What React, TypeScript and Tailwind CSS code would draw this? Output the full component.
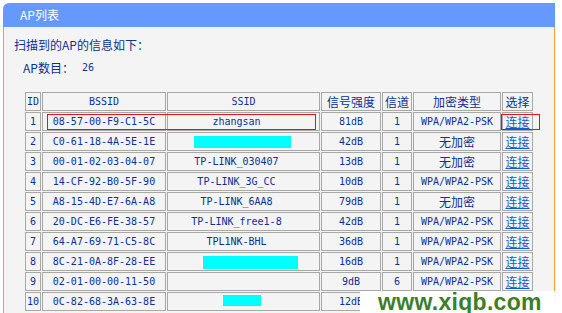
import React from 'react';

type Row = {
    id: number;
    bssid: string;
    ssid?: string;
    mask?: string;
    sig: string;
    ch: string;
    enc: string;
    link: boolean;
};

const rows: Row[] = [
    { id: 1, bssid: '08-57-00-F9-C1-5C', ssid: 'zhangsan', sig: '81dB', ch: '1', enc: 'WPA/WPA2-PSK', link: true },
    { id: 2, bssid: 'C0-61-18-4A-5E-1E', mask: 'w-[97px] h-[12px] -ml-[3px]', sig: '42dB', ch: '1', enc: '无加密', link: true },
    { id: 3, bssid: '00-01-02-03-04-07', ssid: 'TP-LINK_030407', sig: '13dB', ch: '1', enc: '无加密', link: true },
    { id: 4, bssid: '14-CF-92-B0-5F-90', ssid: 'TP-LINK_3G_CC', sig: '10dB', ch: '1', enc: 'WPA/WPA2-PSK', link: true },
    { id: 5, bssid: 'A8-15-4D-E7-6A-A8', ssid: 'TP-LINK_6AA8', sig: '79dB', ch: '1', enc: '无加密', link: true },
    { id: 6, bssid: '20-DC-E6-FE-38-57', ssid: 'TP-LINK_free1-8', sig: '42dB', ch: '1', enc: 'WPA/WPA2-PSK', link: true },
    { id: 7, bssid: '64-A7-69-71-C5-8C', ssid: 'TPL1NK-BHL', sig: '36dB', ch: '1', enc: 'WPA/WPA2-PSK', link: true },
    { id: 8, bssid: '8C-21-0A-8F-28-EE', mask: 'w-[95px] h-[13px] ml-[13px]', sig: '16dB', ch: '1', enc: 'WPA/WPA2-PSK', link: true },
    { id: 9, bssid: '02-01-00-00-11-50', ssid: '', sig: '9dB', ch: '6', enc: 'WPA/WPA2-PSK', link: true },
    // last row is mostly covered by the watermark
    { id: 10, bssid: '0C-82-68-3A-63-8E', mask: 'w-[38px] h-[11px] -ml-[4px] -mt-[3px]', sig: '12dB', ch: '', enc: '', link: false },
];

const mono = "font-['DejaVu_Sans_Mono',monospace] text-[10px]";
const cjk = "font-['Noto_Sans_CJK_SC',sans-serif] text-[12px]";
const cell = 'border border-[#a8a8a8] h-[19px] p-0 text-center align-middle leading-[17px]';

const App = () => {
    return (
        <div className="relative w-[562px] h-[313px] overflow-hidden bg-white pt-[3px] pl-[3px] text-[#0f2f96]">
            <div className="w-[552px] h-[310px] flex flex-col">
                <div className="h-[24px] bg-[#6699ff] rounded-tl-[6px] pl-[17px] flex items-center">
                    <span className={`${cjk} text-white`}>AP列表</span>
                </div>
                <div className="flex-1 bg-[#f4f4f4] border-l border-r border-[#ff9933] pt-[10px]">
                    <div className={`${cjk} h-[16px] leading-[16px] pl-[10px]`}>扫描到的AP的信息如下：</div>
                    <div className={`${cjk} h-[16px] leading-[16px] pl-[19px] mt-[7px] flex`}>
                        <span className="w-[59px]">AP数目：</span>
                        <span className={mono}>26</span>
                    </div>
                    <table className="table-fixed border-separate border-spacing-[1px] ml-[20px] mt-[15px]">
                        <thead>
                            <tr>
                                <th className={`${cell} ${mono} font-normal w-[16px]`}>ID</th>
                                <th className={`${cell} ${mono} font-normal w-[124px]`}>BSSID</th>
                                <th className={`${cell} ${mono} font-normal w-[153px]`}>SSID</th>
                                <th className={`${cell} ${cjk} font-normal w-[60px]`}>信号强度</th>
                                <th className={`${cell} ${cjk} font-normal w-[30px]`}>信道</th>
                                <th className={`${cell} ${cjk} font-normal w-[88px]`}>加密类型</th>
                                <th className={`${cell} ${cjk} font-normal w-[31px]`}>选择</th>
                            </tr>
                        </thead>
                        <tbody>
                            {rows.map((r) => (
                                <tr key={r.id}>
                                    <td className={`${cell} ${mono}`}>{r.id}</td>
                                    <td className={`${cell} ${mono}`}>{r.bssid}</td>
                                    <td className={`${cell} ${mono}`}>
                                        {r.mask ? (
                                            <span className={`inline-block align-middle bg-[#00ffff] ${r.mask}`} />
                                        ) : (
                                            <span className="pr-[14px]">{r.ssid}</span>
                                        )}
                                    </td>
                                    <td className={`${cell} ${mono}`}>
                                        <span className={r.id === 1 ? 'bg-white rounded-[4px] px-[2px] py-[1px]' : ''}>{r.sig}</span>
                                    </td>
                                    <td className={`${cell} ${mono}`}>{r.ch}</td>
                                    <td className={`${cell} ${r.enc === '无加密' ? cjk : mono}`}>{r.enc}</td>
                                    <td className={`${cell} ${cjk}`}>
                                        {r.link && <a className="text-[#0a5fd0] underline">连接</a>}
                                    </td>
                                </tr>
                            ))}
                        </tbody>
                    </table>
                </div>
            </div>

            {/* annotation boxes */}
            <div className="absolute left-[47px] top-[114px] w-[269px] h-[16px] border border-[#e8141b]" />
            <div className="absolute left-[501px] top-[114px] w-[39px] h-[16px] border border-[#e8141b]" />

            {/* watermark */}
            <div className="absolute left-[360px] top-[291px] w-[202px] h-[22px] bg-white flex items-center pl-[18px]">
                <span className="font-['Liberation_Sans',sans-serif] font-bold text-[23px] leading-none text-[#3d7d2c] tracking-[0.3px]">www.xiqb.com</span>
            </div>
        </div>
    );
};

export default App;
